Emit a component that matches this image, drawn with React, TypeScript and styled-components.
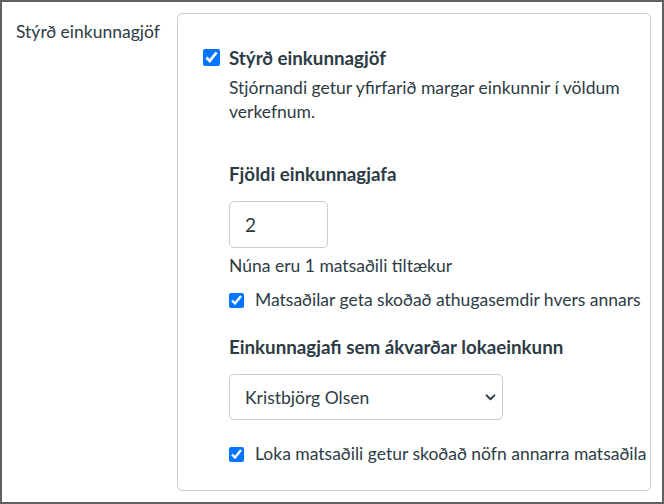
import React from "react";
import styled, { createGlobalStyle } from "styled-components";

const Global = createGlobalStyle`
  html, body {
    margin: 0;
    padding: 0;
    background: #fff;
  }
  body {
    font-family: Lato, "Open Sans", "Liberation Sans", sans-serif;
    color: #2d3b45;
  }
  * {
    box-sizing: border-box;
  }
`;

const App = () => {
  return (
    <Frame>
      <Global />
      <Label>Stýrð einkunnagjöf</Label>
      <Panel>
        <TitleRow>
          <Check size={17} defaultChecked />
          <Title>Stýrð einkunnagjöf</Title>
        </TitleRow>
        <Indent>
          <Desc>Stjórnandi getur yfirfarið margar einkunnir í völdum verkefnum.</Desc>

          <Heading top={37}>Fjöldi einkunnagjafa</Heading>
          <NumberInput defaultValue="2" />
          <Hint>Núna eru 1 matsaðili tiltækur</Hint>
          <CheckRow top={10}>
            <Check size={15} defaultChecked />
            <span>Matsaðilar geta skoðað athugasemdir hvers annars</span>
          </CheckRow>

          <Heading top={22}>Einkunnagjafi sem ákvarðar lokaeinkunn</Heading>
          <SelectWrap>
            <Select defaultValue="ko">
              <option value="ko">Kristbjörg Olsen</option>
            </Select>
            <Chevron viewBox="0 0 12 8">
              <path d="M1.5 1.5 L6 6 L10.5 1.5" fill="none" stroke="#2d3b45" strokeWidth="2.2" strokeLinecap="round" strokeLinejoin="round" />
            </Chevron>
          </SelectWrap>
          <CheckRow top={22}>
            <Check size={15} defaultChecked />
            <span>Loka matsaðili getur skoðað nöfn annarra matsaðila</span>
          </CheckRow>
        </Indent>
      </Panel>
    </Frame>
  );
};

export default App;

const Frame = styled.div`
  width: 664px;
  height: 504px;
  border: 2px solid #616161;
  padding: 11px 11px 12px 14px;
  display: flex;
  align-items: flex-start;
`;

const Label = styled.div`
  width: 161px;
  flex-shrink: 0;
  font-size: 17.5px;
  line-height: 24px;
  margin-top: 7px;
`;

const Panel = styled.div`
  width: 475px;
  height: 478px;
  border: 1px solid #c7cdd1;
  border-radius: 5px;
  padding: 31px 4px 0 25px;
  display: flex;
  flex-direction: column;
`;

const TitleRow = styled.label`
  display: flex;
  align-items: center;
  gap: 9px;
`;

const Check = styled.input.attrs({ type: "checkbox" })<{ size: number }>`
  margin: 0;
  width: ${({ size }) => size}px;
  height: ${({ size }) => size}px;
  flex-shrink: 0;
  accent-color: #0075ff;
`;

const Title = styled.span`
  font-size: 18.75px;
  font-weight: 700;
  line-height: 25px;
`;

const Indent = styled.div`
  padding-left: 26px;
  display: flex;
  flex-direction: column;
  align-items: flex-start;
`;

const Desc = styled.div`
  font-size: 17.5px;
  line-height: 24px;
  margin-top: 6px;
  max-width: 400px;
`;

const Heading = styled.div<{ top: number }>`
  font-size: 18.75px;
  font-weight: 700;
  line-height: 25px;
  margin-top: ${({ top }) => top}px;
`;

const NumberInput = styled.input.attrs({ type: "text" })`
  margin-top: 15px;
  width: 99px;
  height: 47px;
  border: 1px solid #c7cdd1;
  border-radius: 5px;
  padding: 0 15px;
  font-family: Lato, "Liberation Sans", sans-serif;
  font-size: 19px;
  color: #2d3b45;
  outline: none;
`;

const Hint = styled.div`
  font-size: 17.5px;
  line-height: 24px;
  margin-top: 6px;
`;

const CheckRow = styled.label<{ top: number }>`
  display: flex;
  align-items: center;
  gap: 11px;
  font-size: 17.5px;
  line-height: 24px;
  margin-top: ${({ top }) => top}px;
  white-space: nowrap;
`;

const SelectWrap = styled.div`
  position: relative;
  margin-top: 15px;
  width: 274px;
  height: 46px;
`;

const Select = styled.select`
  appearance: none;
  width: 100%;
  height: 100%;
  border: 1px solid #c7cdd1;
  border-radius: 5px;
  background: #fff;
  padding: 0 30px 0 15px;
  font-family: Lato, "Liberation Sans", sans-serif;
  font-size: 17.5px;
  color: #2d3b45;
  outline: none;
`;

const Chevron = styled.svg`
  position: absolute;
  right: 7px;
  top: 20px;
  width: 11px;
  height: 7px;
  pointer-events: none;
`;
